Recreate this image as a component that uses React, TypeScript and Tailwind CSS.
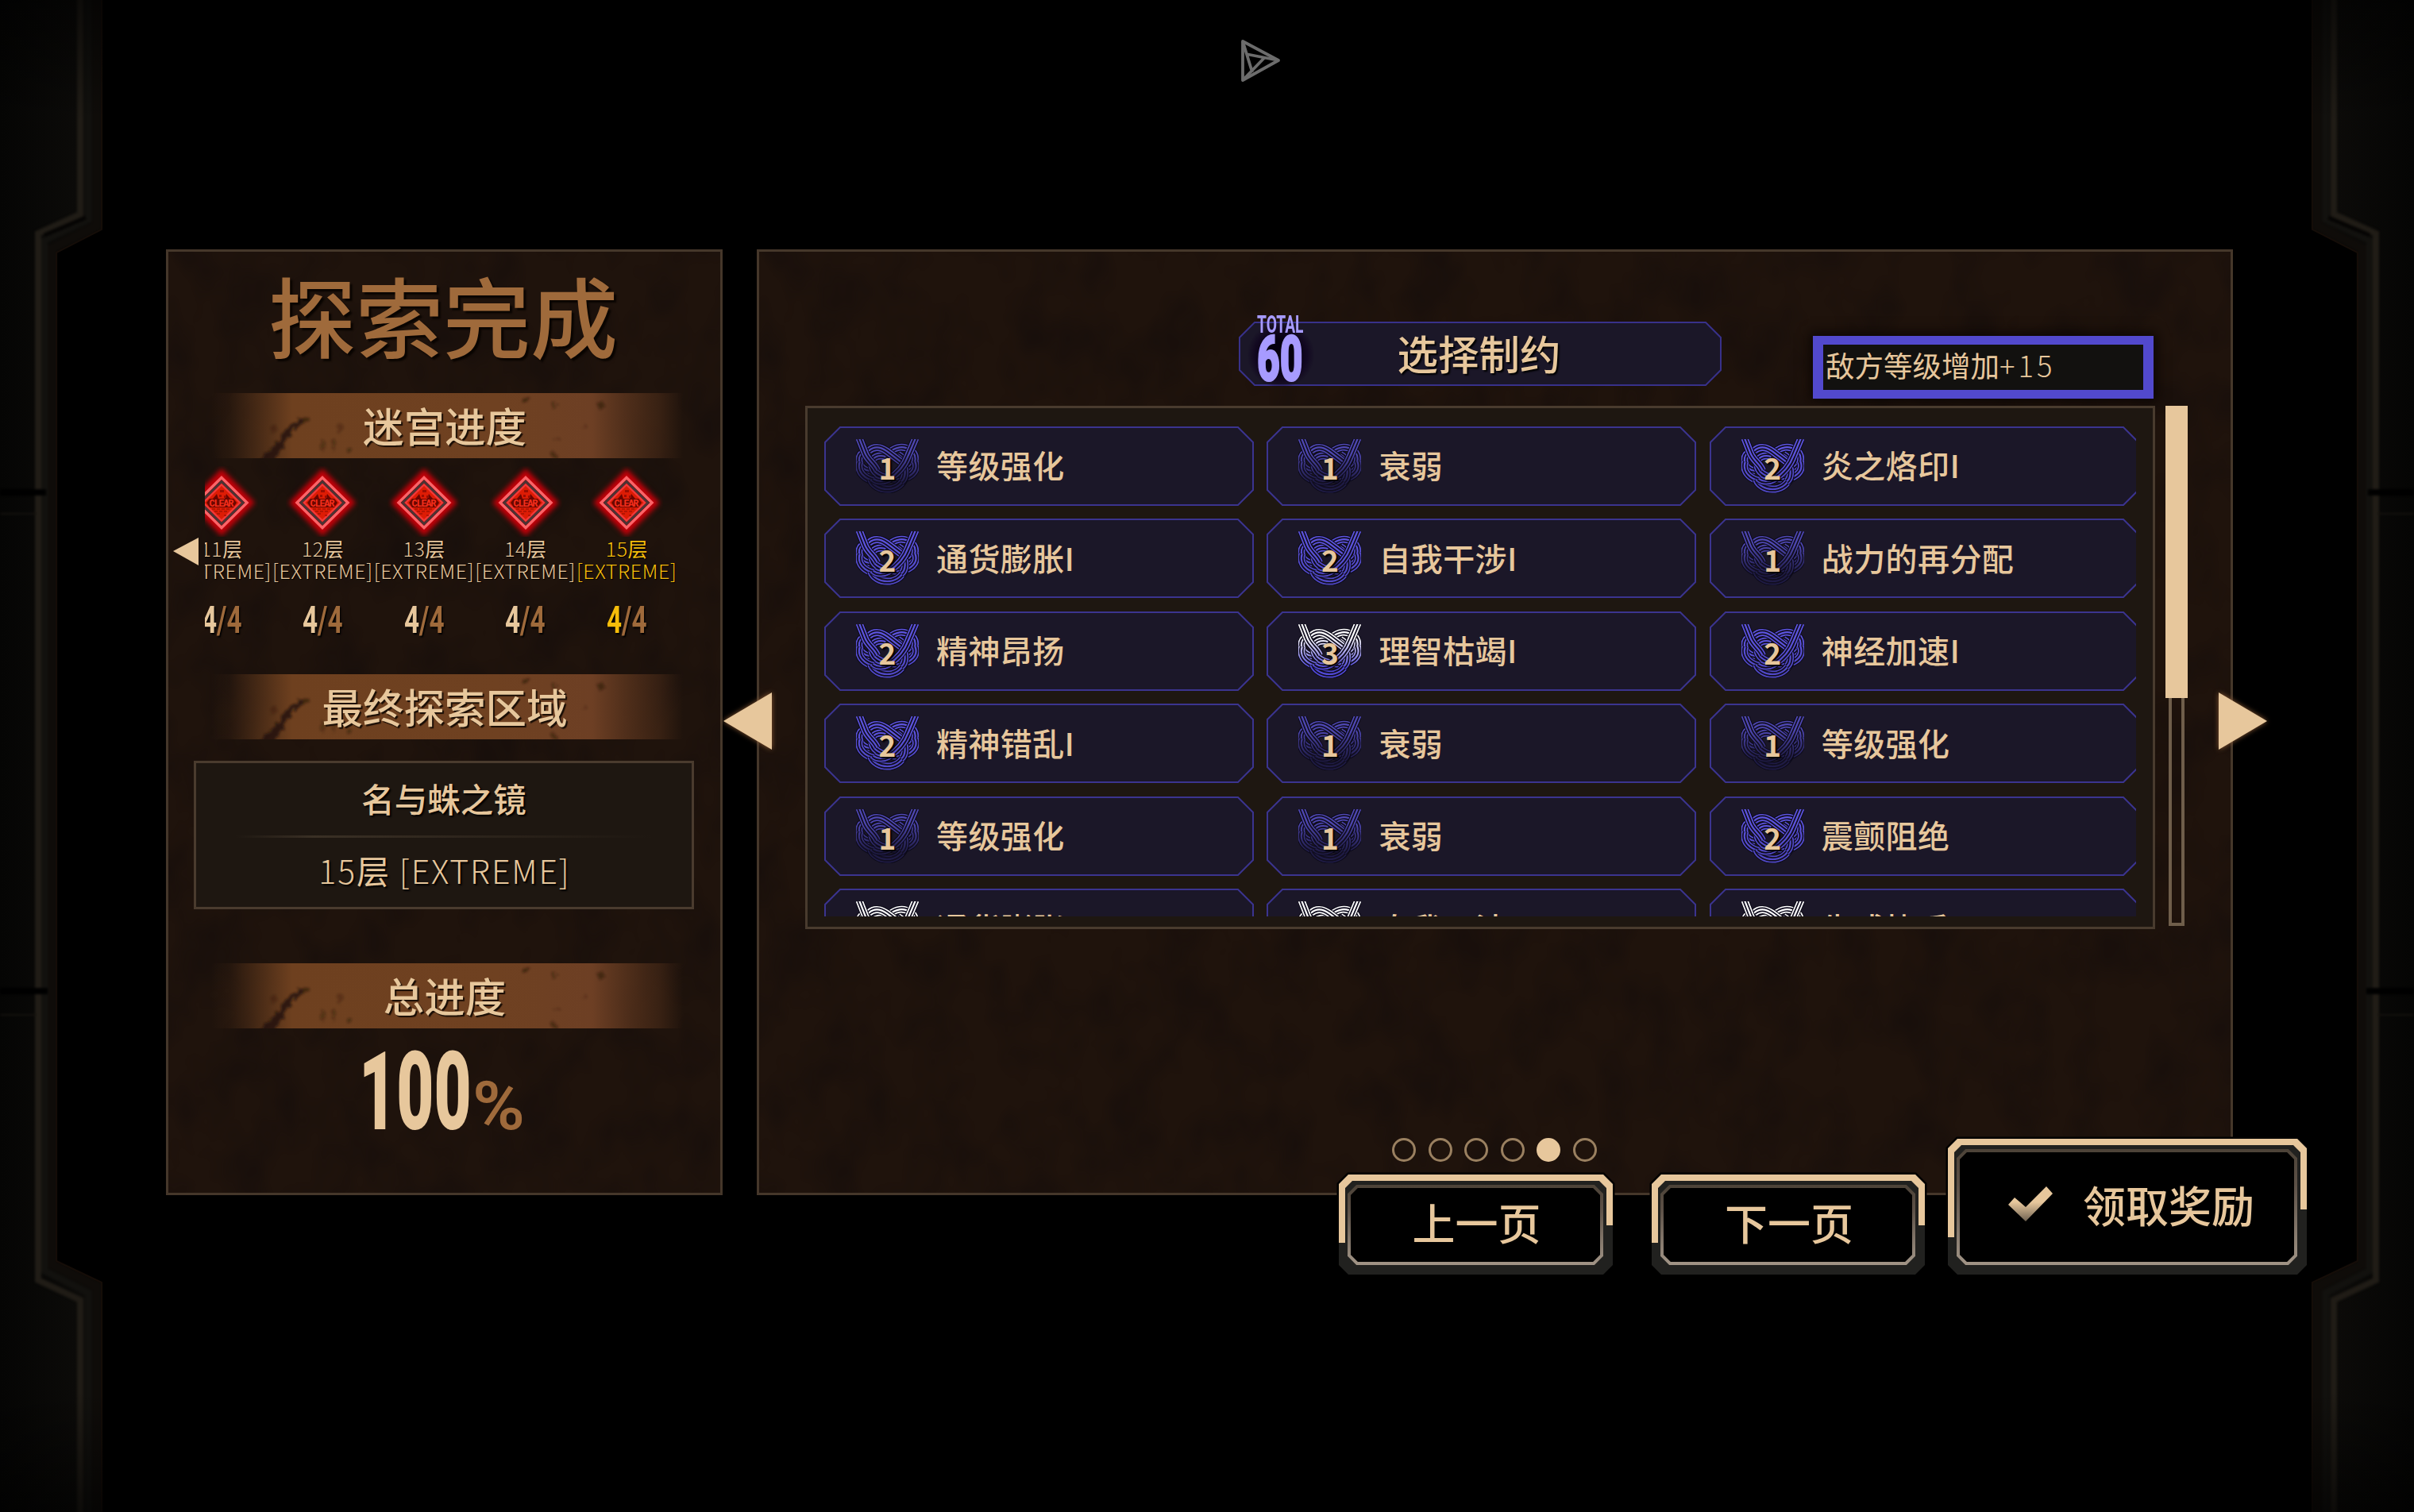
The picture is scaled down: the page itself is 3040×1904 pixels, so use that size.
import React from 'react'

const floors = [
  { label: '11', current: false },
  { label: '12', current: false },
  { label: '13', current: false },
  { label: '14', current: false },
  { label: '15', current: true },
]

const constraints = [
  { level: 1, name: '等级强化' },
  { level: 1, name: '衰弱' },
  { level: 2, name: '炎之烙印I' },
  { level: 2, name: '通货膨胀I' },
  { level: 2, name: '自我干涉I' },
  { level: 1, name: '战力的再分配' },
  { level: 2, name: '精神昂扬' },
  { level: 3, name: '理智枯竭I' },
  { level: 2, name: '神经加速I' },
  { level: 2, name: '精神错乱I' },
  { level: 1, name: '衰弱' },
  { level: 1, name: '等级强化' },
  { level: 1, name: '等级强化' },
  { level: 1, name: '衰弱' },
  { level: 2, name: '震颤阻绝' },
  { level: 4, name: '通货膨胀II' },
  { level: 4, name: '自我干涉II' },
  { level: 4, name: '生成协后' },
]

const knotColors: Record<number, [string, string]> = {
  1: ['#4f48b4', '#1f1b45'],
  2: ['#5d54e0', '#5149c8'],
  3: ['#ffffff', '#5149d8'],
  4: ['#ffffff', '#ffffff'],
}

const knotBands = [
  'M186 120 C226 116 238 60 208 42 C180 22 150 30 128 48',
  'M52 120 C12 116 0 70 24 52',
  'M14 86 C0 130 50 172 112 152 C160 138 186 120 182 86 C180 70 172 64 160 58',
  'M224 84 C240 124 196 158 140 150 C96 144 62 128 60 96 C58 66 88 58 112 66',
  'M56 152 C74 200 160 206 184 146',
  'M48 44 C70 24 96 30 118 46 L168 84 C196 110 186 150 172 160',
  'M12 -4 L34 52 C44 80 70 92 80 118',
  'M226 -4 L198 62 C184 100 160 130 122 152 C104 162 82 162 66 150',
]

const Knot = ({ level, id }: { level: number; id: number }) => (
  <svg className="w-[79px] h-[68px]" viewBox="0 0 238 204">
    <defs>
      <linearGradient id={`knot${id}`} gradientUnits="userSpaceOnUse" x1="0" y1="0" x2="0" y2="204">
        <stop offset="0.25" stopColor={knotColors[level][0]} />
        <stop offset="0.8" stopColor={knotColors[level][1]} />
      </linearGradient>
    </defs>
    {knotBands.map((d) => (
      <g key={d} fill="none">
        <path d={d} stroke="#0b0917" strokeWidth="33" />
        <path d={d} stroke={`url(#knot${id})`} strokeWidth="27" />
        <path d={d} stroke="#110e20" strokeWidth="17" />
        <path d={d} stroke={`url(#knot${id})`} strokeWidth="6.5" />
      </g>
    ))}
  </svg>
)

const ConstraintCard = ({ level, name, id }: { level: number; name: string; id: number }) => (
  <div className="relative flex items-center w-[541px] h-[100px] pl-[40px]">
    <svg className="absolute inset-0 w-full h-full" viewBox="0 0 541 100">
      <path d="M20 1 H521 L540 20 V80 L521 99 H20 L1 80 V20 Z" fill="#1b1728" stroke="#3b348f" strokeWidth="2" />
    </svg>
    <div className="relative w-[79px] h-[68px]">
      <Knot level={level} id={id} />
      <span className="absolute inset-x-0 top-[17px] text-center font-bold text-[37px] leading-none [text-shadow:2px_2px_2px_#000]">
        {level}
      </span>
    </div>
    <span className="relative ml-[22px] pb-[3px] text-[40px] leading-none tracking-[0.4px] font-medium whitespace-nowrap">
      {name}
    </span>
  </div>
)

const Banner = ({ children }: { children: React.ReactNode }) => (
  <div className="relative flex items-center justify-center h-[82px] w-[600px] ml-[54px]">
    <svg className="absolute inset-0 w-full h-full" viewBox="0 0 600 82">
      <defs>
        <linearGradient id="bannerFill">
          <stop offset="0" stopColor="#6e401f" stopOpacity="0" />
          <stop offset="0.04" stopColor="#6e401f" stopOpacity="0.12" />
          <stop offset="0.17" stopColor="#6e401f" />
          <stop offset="0.6" stopColor="#6f4121" />
          <stop offset="0.8" stopColor="#6d3f24" />
          <stop offset="0.94" stopColor="#5f371e" stopOpacity="0.4" />
          <stop offset="0.99" stopColor="#5f371e" stopOpacity="0" />
        </linearGradient>
        <filter id="rough" x="-20%" y="-20%" width="140%" height="140%">
          <feTurbulence type="fractalNoise" baseFrequency="0.12" numOctaves="3" seed="4" />
          <feDisplacementMap in="SourceGraphic" scale="12" xChannelSelector="R" yChannelSelector="G" />
          <feGaussianBlur stdDeviation="1.4" />
        </filter>
      </defs>
      <rect width="600" height="82" fill="url(#bannerFill)" />
      <g filter="url(#rough)" fill="#1c1109" opacity="0.75">
        <path d="M112 32 L119 36 L104 46 L97 58 L89 70 L80 84 L58 86 L76 72 L86 56 L96 42 Z" />
        <circle cx="118" cy="33" r="5" opacity="0.7" />
        <circle cx="78" cy="46" r="4" opacity="0.3" />
        <circle cx="162" cy="44" r="5" opacity="0.3" />
        <path d="M138 60 L143 60 L141 76 Z M152 58 L157 60 L153 74 Z" opacity="0.4" />
        <circle cx="176" cy="72" r="3" opacity="0.5" />
        <circle cx="396" cy="9" r="3.5" opacity="0.7" />
        <path d="M432 12 L438 11 L426 22 Z" opacity="0.6" />
        <circle cx="492" cy="16" r="4" opacity="0.6" />
        <circle cx="432" cy="78" r="3.5" opacity="0.6" />
        <circle cx="436" cy="58" r="3" opacity="0.3" />
        <circle cx="470" cy="42" r="3" opacity="0.3" />
      </g>
    </svg>
    <span className="relative pb-[3px] pr-[12px] text-[51.5px] leading-none font-medium [text-shadow:2px_2px_1px_#1a0e06]">
      {children}
    </span>
  </div>
)

const ClearGem = () => (
  <svg className="w-[92px] h-[89px]" viewBox="0 0 92 89">
    <defs>
      <filter id="gemGlow" x="-30%" y="-30%" width="160%" height="160%" colorInterpolationFilters="sRGB">
        <feGaussianBlur stdDeviation="3.2" />
      </filter>
    </defs>
    <path d="M46 3 L88 46 L46 88 L4 46 Z" fill="#c40009" filter="url(#gemGlow)" />
    <path d="M46 14.5 L78 46 L46 77.5 L14 46 Z" fill="#7c0a08" stroke="#fb6468" strokeWidth="3.5" />
    <path d="M46 19.5 L73 46 L46 72.5 L19 46 Z" fill="#d81a10" stroke="#4c3234" strokeWidth="3" />
    <path d="M46 23.5 L69 46 L46 68.5 L23 46 Z" fill="#dd1c05" stroke="#f23a3a" strokeWidth="2" />
    <path d="M40 35 L35 41 H42 Z M52 35 L57 41 H50 Z" fill="#6b0500" />
    <path d="M44 30 H49 V33 H44 Z M43 36 H46 V39 H43 Z M49 37 H52 V40 H49 Z" fill="#9c0d02" />
    <path d="M34 54 H58 M37 57 H55 M40 60 H46 M49 62 H52" stroke="#a51203" strokeWidth="1.5" strokeDasharray="4 2" />
    <path d="M31 41 H61 L65 46 L61 52 H31 L27 46 Z" fill="#6a0700" />
    <text x="46" y="50.5" textAnchor="middle" textLength="31" fontFamily="Liberation Mono, monospace" fontWeight="700" fontSize="12" fill="#f52e1c">
      CLEAR
    </text>
  </svg>
)

const FrameButton = ({
  w,
  h,
  left,
  right,
  children,
}: {
  w: number
  h: number
  left: number
  right: number
  children: React.ReactNode
}) => (
  <button className="relative flex items-center justify-center text-[54px] leading-none font-medium" style={{ width: w, height: h }}>
    <svg className="absolute inset-0 w-full h-full overflow-visible" viewBox={`0 0 ${w} ${h}`}>
      <defs>
        <linearGradient id={`frame${w}`} x1="0" y1="0" x2="0" y2="1">
          <stop offset="0" stopColor="#4d4338" />
          <stop offset="0.3" stopColor="#5d5147" />
          <stop offset="1" stopColor="#a09385" />
        </linearGradient>
      </defs>
      <path
        d={`M12 0 H${w - 12} L${w} 12 V${h - 12} L${w - 12} ${h} H12 L0 ${h - 12} V12 Z`}
        fill="#21211f"
        stroke="#000000"
        strokeWidth="5"
        paintOrder="stroke"
      />
      <path
        d={`M23 15 H${w - 24} L${w - 14} 25 V${h - 24} L${w - 24} ${h - 14} H23 L13 ${h - 24} V25 Z`}
        fill="#000000"
        stroke={`url(#frame${w})`}
        strokeWidth="4"
      />
      <path
        d={`M0 ${left} V12 L12 0 H${w - 12} L${w} 12 V${right} H${w - 8} V17 L${w - 17} 8 H17 L8 17 V${left} Z`}
        fill="#e7c79c"
      />
    </svg>
    <span className="relative flex items-center">{children}</span>
  </button>
)

const SideFrame = () => (
  <svg className="w-[134px] h-full" viewBox="0 0 134 1904">
    <defs>
      <linearGradient id="stone">
        <stop offset="0" stopColor="#050504" />
        <stop offset="0.8" stopColor="#0c0b09" />
      </linearGradient>
      <linearGradient id="stoneFade" x1="0" y1="0" x2="0" y2="1">
        <stop offset="0" stopColor="#000" stopOpacity="0.6" />
        <stop offset="0.08" stopColor="#000" stopOpacity="0" />
        <stop offset="0.92" stopColor="#000" stopOpacity="0" />
        <stop offset="1" stopColor="#000" stopOpacity="0.6" />
      </linearGradient>
      <filter id="soft" colorInterpolationFilters="sRGB">
        <feGaussianBlur stdDeviation="1.5" />
      </filter>
    </defs>
    <path d="M0 0 H129 V289 L72 318 V1588 L129 1615 V1904 H0 Z" fill="url(#stone)" />
    <g fill="none" filter="url(#soft)">
      <path d="M122 -5 V284 L65 313 V1592 L122 1620 V1910" stroke="#0f0c09" strokeWidth="12" />
      <path d="M111 -5 V276 L56 303 V1600 L111 1628 V1910" stroke="#12110e" strokeWidth="9" />
      <path d="M101 -5 V270 L48 294 V1612 L101 1637 V1910" stroke="#201c16" strokeWidth="8" />
      <path d="M56 296 L108 274" stroke="#050403" strokeWidth="5" />
      <path d="M0 620 H58 M0 1248 H60" stroke="#000000" strokeWidth="8" />
      <path d="M0 647 H46 M0 1278 H46" stroke="#15120e" strokeWidth="2" />
    </g>
    <path d="M128 0 V289 L71 318 V1588 L128 1615 V1904" fill="none" stroke="#150d08" strokeWidth="2" />
    <rect width="134" height="1904" fill="url(#stoneFade)" />
  </svg>
)

const PanelTexture = () => (
  <svg className="absolute inset-0 w-full h-full" preserveAspectRatio="none">
    <defs>
      <filter id="grime" x="0" y="0" width="100%" height="100%" colorInterpolationFilters="sRGB">
        <feTurbulence type="fractalNoise" baseFrequency="0.016 0.012" numOctaves="3" seed="7" />
        <feColorMatrix values="0 0 0 0 0.06  0 0 0 0 0.04  0 0 0 0 0.045  0 0 0 1.8 -0.75" />
      </filter>
    </defs>
    <rect width="100%" height="100%" filter="url(#grime)" opacity="0.5" />
  </svg>
)

const App: React.FC = () => {
  return (
    <div className="relative w-[3040px] h-[1904px] overflow-hidden bg-black text-[#e7c79c] font-['Noto_Sans_CJK_SC',sans-serif]">
      <div className="absolute inset-0 flex justify-between">
        <SideFrame />
        <div className="h-full -scale-x-100">
          <SideFrame />
        </div>
      </div>

      {/* Play marker */}
      <svg className="absolute left-[1555px] top-[42px] w-[64px] h-[68px]" viewBox="0 0 64 68" fill="none" stroke="#6c6c6c" strokeWidth="3.8" strokeLinejoin="round">
        <path d="M10 10 L55 34 L10 59 Z" />
        <path d="M10 10 L22 49 M14 26 L55 34 M38 30 L10 59" />
      </svg>

      <div className="relative flex gap-[43px] pl-[209px] pt-[314px]">
        {/* Progress panel */}
        <section className="relative w-[701px] h-[1191px] border-[3px] border-[#45372a] bg-[#1f130c]">
          <PanelTexture />
          <div className="relative flex flex-col">
            <h1 className="mt-[23px] -ml-[3px] text-center text-[110px] leading-none font-medium text-[#9f6a3b] [text-shadow:3px_3px_2px_#0a0502]">
              探索完成
            </h1>
            <div className="mt-[45px]">
              <Banner>迷宫进度</Banner>
            </div>

            <div className="mt-[10px] ml-[46px] w-[598px] h-[219px] overflow-hidden">
              <div className="flex -ml-[43px]">
                {floors.map((floor) => (
                  <div
                    key={floor.label}
                    className={`flex flex-col items-center shrink-0 w-[127.6px] ${floor.current ? 'text-[#f5bd0a]' : ''}`}
                  >
                    <ClearGem />
                    <div className="text-[25px] leading-[28px] whitespace-nowrap text-center [text-shadow:1px_1px_1px_#000]">
                      <div>
                        <span className="font-light tracking-[0.5px]">{floor.label}</span>层
                      </div>
                      <div className="font-light tracking-[0.6px]">[EXTREME]</div>
                    </div>
                    <div className="mt-[24px] scale-x-[0.68] font-['Roboto'] font-bold text-[49px] leading-none [text-shadow:2px_2px_2px_#000]">
                      4<span className="text-[#9f6a3b]">/4</span>
                    </div>
                  </div>
                ))}
              </div>
            </div>

            <div className="mt-[43px]">
              <Banner>最终探索区域</Banner>
            </div>

            <div className="flex flex-col items-center ml-[32px] mt-[27px] w-[630px] h-[187px] border-[3px] border-[#4a3b2e] bg-[#1e1711]">
              <div className="mt-[24px] text-[41.5px] leading-none font-medium [text-shadow:2px_2px_2px_#000]">名与蛛之镜</div>
              <div className="mt-[25px] h-[3px] w-[546px] bg-linear-to-r from-transparent via-[#3a3025] to-transparent from-2% via-20% to-98%" />
              <div className="mt-[20px] pl-[2px] text-[41px] leading-none font-light tracking-[1.9px] whitespace-nowrap [text-shadow:2px_2px_2px_#000]">
                15<span className="font-normal">层</span> [EXTREME]
              </div>
            </div>

            <div className="mt-[68px]">
              <Banner>总进度</Banner>
            </div>

            <div className="flex items-baseline mt-[11px] ml-[240px] font-['Roboto'] leading-none font-bold">
              <span className="inline-block w-[143px] origin-left scale-x-[0.59] font-black text-[138px]">100</span>
              <span className="inline-block origin-left scale-x-[1.04] font-semibold text-[86px] text-[#9f6a3b]">%</span>
            </div>
          </div>

          <svg className="absolute left-[4px] top-[355px] w-[40px] h-[44px]" viewBox="0 0 40 44">
            <path d="M2 22 L34 5 V40 Z" fill="#e7c79c" />
          </svg>
        </section>

        {/* Constraint panel */}
        <section className="relative w-[1859px] h-[1191px] border-[3px] border-[#45372a] bg-[#1f130c]">
          <PanelTexture />
          <div className="relative flex flex-col">
            <div className="flex mt-[88px] ml-[604px] h-[97px]">
              <div className="relative w-[608px] h-[81px] flex items-center justify-center">
                <svg className="absolute inset-0 w-full h-full" viewBox="0 0 608 81">
                  <path d="M20 1 H588 L607 20 V61 L588 80 H20 L1 61 V20 Z" fill="#1b1728" stroke="#38318a" strokeWidth="2" />
                </svg>
                <span className="relative pb-[3px] pr-[3px] text-[51.5px] leading-none font-medium [text-shadow:2px_2px_2px_#000]">选择制约</span>
                <div className="absolute left-[10px] top-[0px] w-[86px] h-[84px] bg-radial from-[#05000f] from-30% via-[#10051f]/80 via-55% to-transparent to-70%" />
                <div className="absolute left-[23px] -top-[9px] font-['Roboto'] text-[#a79bff]">
                  <div className="origin-left scale-x-[0.62] font-bold text-[31px] leading-[25px]">TOTAL</div>
                  <div className="origin-left scale-x-[0.63] w-[60px] font-black text-[79px] leading-[62px] [-webkit-text-stroke:2px_#a79bff]">60</div>
                </div>
              </div>
              <div className="ml-[115px] mt-[18px] w-[429px] h-[79px] border-x-[13px] border-y-[11px] border-[#5249cd] bg-[#12110f] pl-[3px] flex items-center text-[36.5px] leading-none whitespace-nowrap shadow-[0_0_14px_4px_#0c0604]">
                <span className="pb-[4px]">
                  敌方等级增加<span className="font-light tracking-[4px]">+15</span>
                </span>
              </div>
            </div>

            <div className="flex mt-[9px] ml-[58px]">
              <div className="w-[1700px] h-[659px] border-[3px] border-[#493b2e] bg-[#1e1711] pl-[21px] pt-[22.5px]">
                <div className="w-[1652px] h-[617px] overflow-hidden">
                  <div className="grid grid-cols-[repeat(3,541px)] gap-x-[16.4px] gap-y-[16.6px]">
                    {constraints.map((item, index) => (
                      <ConstraintCard key={index} id={index} level={item.level} name={item.name} />
                    ))}
                  </div>
                </div>
              </div>
              <div className="ml-[13px] w-[28px] h-[655px] flex flex-col items-center">
                <div className="w-[28px] h-[368px] bg-[#e7c79c]" />
                <div className="w-[20px] flex-1 border-[4px] border-t-0 border-[#6f5e4a]" />
              </div>
            </div>

            <div className="flex gap-[15.6px] mt-[263px] ml-[797px]">
              {[0, 1, 2, 3, 4, 5].map((page) => (
                <span
                  key={page}
                  className={`size-[30px] rounded-full border-[3px] ${page === 4 ? 'bg-[#e7c79c] border-[#e7c79c]' : 'border-[#9a8060]'}`}
                />
              ))}
            </div>
          </div>

          <svg className="absolute -left-[51px] top-[546px] w-[76px] h-[90px] [filter:drop-shadow(0_0_3px_#8a5a35)]" viewBox="0 0 76 90">
            <path d="M6 45 L67 9 V81 Z" fill="#e7c79c" />
          </svg>
          <svg className="absolute -right-[52px] top-[546px] w-[76px] h-[90px] [filter:drop-shadow(0_0_3px_#8a5a35)]" viewBox="0 0 76 90">
            <path d="M70 45 L9 9 V81 Z" fill="#e7c79c" />
          </svg>
        </section>
      </div>

      {/* Actions */}
      <div className="relative flex items-end -mt-[71px] ml-[1686px]">
        <FrameButton w={345} h={126} left={86} right={64}>
          <span className="-mt-[6px] pl-[2px]">上一页</span>
        </FrameButton>
        <div className="ml-[49px]">
          <FrameButton w={344} h={126} left={86} right={64}>
            <span className="-mt-[6px] pl-[2px]">下一页</span>
          </FrameButton>
        </div>
        <div className="ml-[29px]">
          <FrameButton w={452} h={171} left={124} right={89}>
            <svg className="w-[60px] h-[48px] ml-[8px] mr-[36px] -mt-[8px]" viewBox="0 0 60 48">
              <defs>
                <linearGradient id="check" x1="0" y1="0" x2="0" y2="1">
                  <stop offset="0.45" stopColor="#e7c79c" />
                  <stop offset="1" stopColor="#6f6252" />
                </linearGradient>
              </defs>
              <path d="M2 25 L10 16 L24 28 L50 2 L58 11 L24 46 Z" fill="url(#check)" />
            </svg>
            <span className="-mt-[6px]">领取奖励</span>
          </FrameButton>
        </div>
      </div>
    </div>
  )
}

export default App
